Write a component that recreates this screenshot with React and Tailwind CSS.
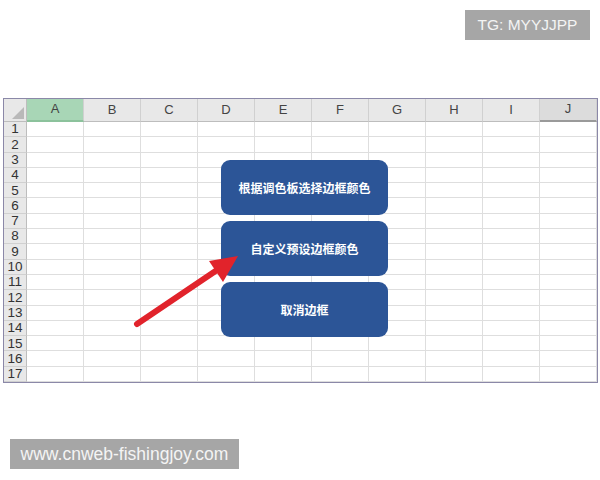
import React from 'react'

// ─── Sheet config ──────────────────────────────────────────────────────────────
const COLS = ['A', 'B', 'C', 'D', 'E', 'F', 'G', 'H', 'I', 'J']
const ROWS = Array.from({ length: 17 }, (_, i) => i + 1)

const BUTTONS = ['根据调色板选择边框颜色', '自定义预设边框颜色', '取消边框']

const CJK = "font-['Noto_Sans_CJK_SC','Noto_Sans',sans-serif]"
const LATIN = "font-['Liberation_Sans',Arial,sans-serif]"

// ─── Header cell ───────────────────────────────────────────────────────────────
const ColHeader = ({ label }) => {
  const active = label === 'A'
  const last = label === 'J'
  return (
    <div
      className={`flex items-end justify-center pb-[2px] text-[13px] text-[#444] border-r border-[#d0d0d0] ${
        active
          ? 'bg-[#a8d6b6] border-b-2 border-b-[#8cc29c]'
          : last
          ? 'bg-[#dcdcdc] border-b-2 border-b-[#9a9a9a]'
          : 'bg-[#e8e8e8] border-b border-b-[#bdbdbd]'
      }`}
    >
      {label}
    </div>
  )
}

export default function App() {
  return (
    <div className={`w-[600px] h-[480px] bg-white flex flex-col ${LATIN}`}>
      {/* top watermark */}
      <div className="h-[98px] pt-[10px] pr-[10px] flex justify-end items-start">
        <div className="w-[125px] h-[30px] bg-[#a6a6a6] flex items-center justify-center text-[15.5px] text-[#f4f4f4]">
          TG: MYYJJPP
        </div>
      </div>

      {/* spreadsheet */}
      <div className="ml-[3px] w-[595px] h-[285px] border border-[#8b88a8] relative overflow-hidden">
        <div className="grid grid-cols-[23px_repeat(10,57px)] grid-rows-[23px_repeat(17,15.3px)]">
          {/* corner */}
          <div className="bg-[#e8e8e8] border-r border-b border-[#bdbdbd] relative">
            <div className="absolute right-[2px] bottom-[2px] w-0 h-0 border-l-[12px] border-l-transparent border-b-[12px] border-b-[#b9b9b9]" />
          </div>
          {COLS.map((c) => (
            <ColHeader key={c} label={c} />
          ))}

          {ROWS.map((r) => (
            <React.Fragment key={r}>
              <div className="bg-[#e8e8e8] border-r border-r-[#bdbdbd] border-b border-b-[#d0d0d0] flex items-center justify-center text-[13.5px] leading-none text-[#333]">
                {r}
              </div>
              {COLS.map((c) => (
                <div key={c} className="border-r border-b border-[#dedede]" />
              ))}
            </React.Fragment>
          ))}
        </div>

        {/* macro buttons */}
        <div className="absolute left-[217px] top-[61px] flex flex-col gap-[6px]">
          {BUTTONS.map((b) => (
            <div
              key={b}
              className={`w-[167px] h-[55px] rounded-[9px] bg-[#2c5597] flex items-center justify-center text-white text-[12px] font-bold ${CJK}`}
            >
              {b}
            </div>
          ))}
        </div>

        {/* red arrow */}
        <svg className="absolute left-0 top-0" width="595" height="285" viewBox="0 0 595 285">
          <line x1="133" y1="225" x2="216" y2="169" stroke="#e1232b" strokeWidth="6" strokeLinecap="round" />
          <polygon points="234,157 205,162 219,183" fill="#e1232b" />
        </svg>
      </div>

      {/* bottom watermark */}
      <div className="mt-[56px] pl-[10px] flex">
        <div className="w-[229px] h-[30px] bg-[#a6a6a6] flex items-center justify-center text-[17.5px] text-[#f4f4f4]">
          www.cnweb-fishingjoy.com
        </div>
      </div>
    </div>
  )
}
